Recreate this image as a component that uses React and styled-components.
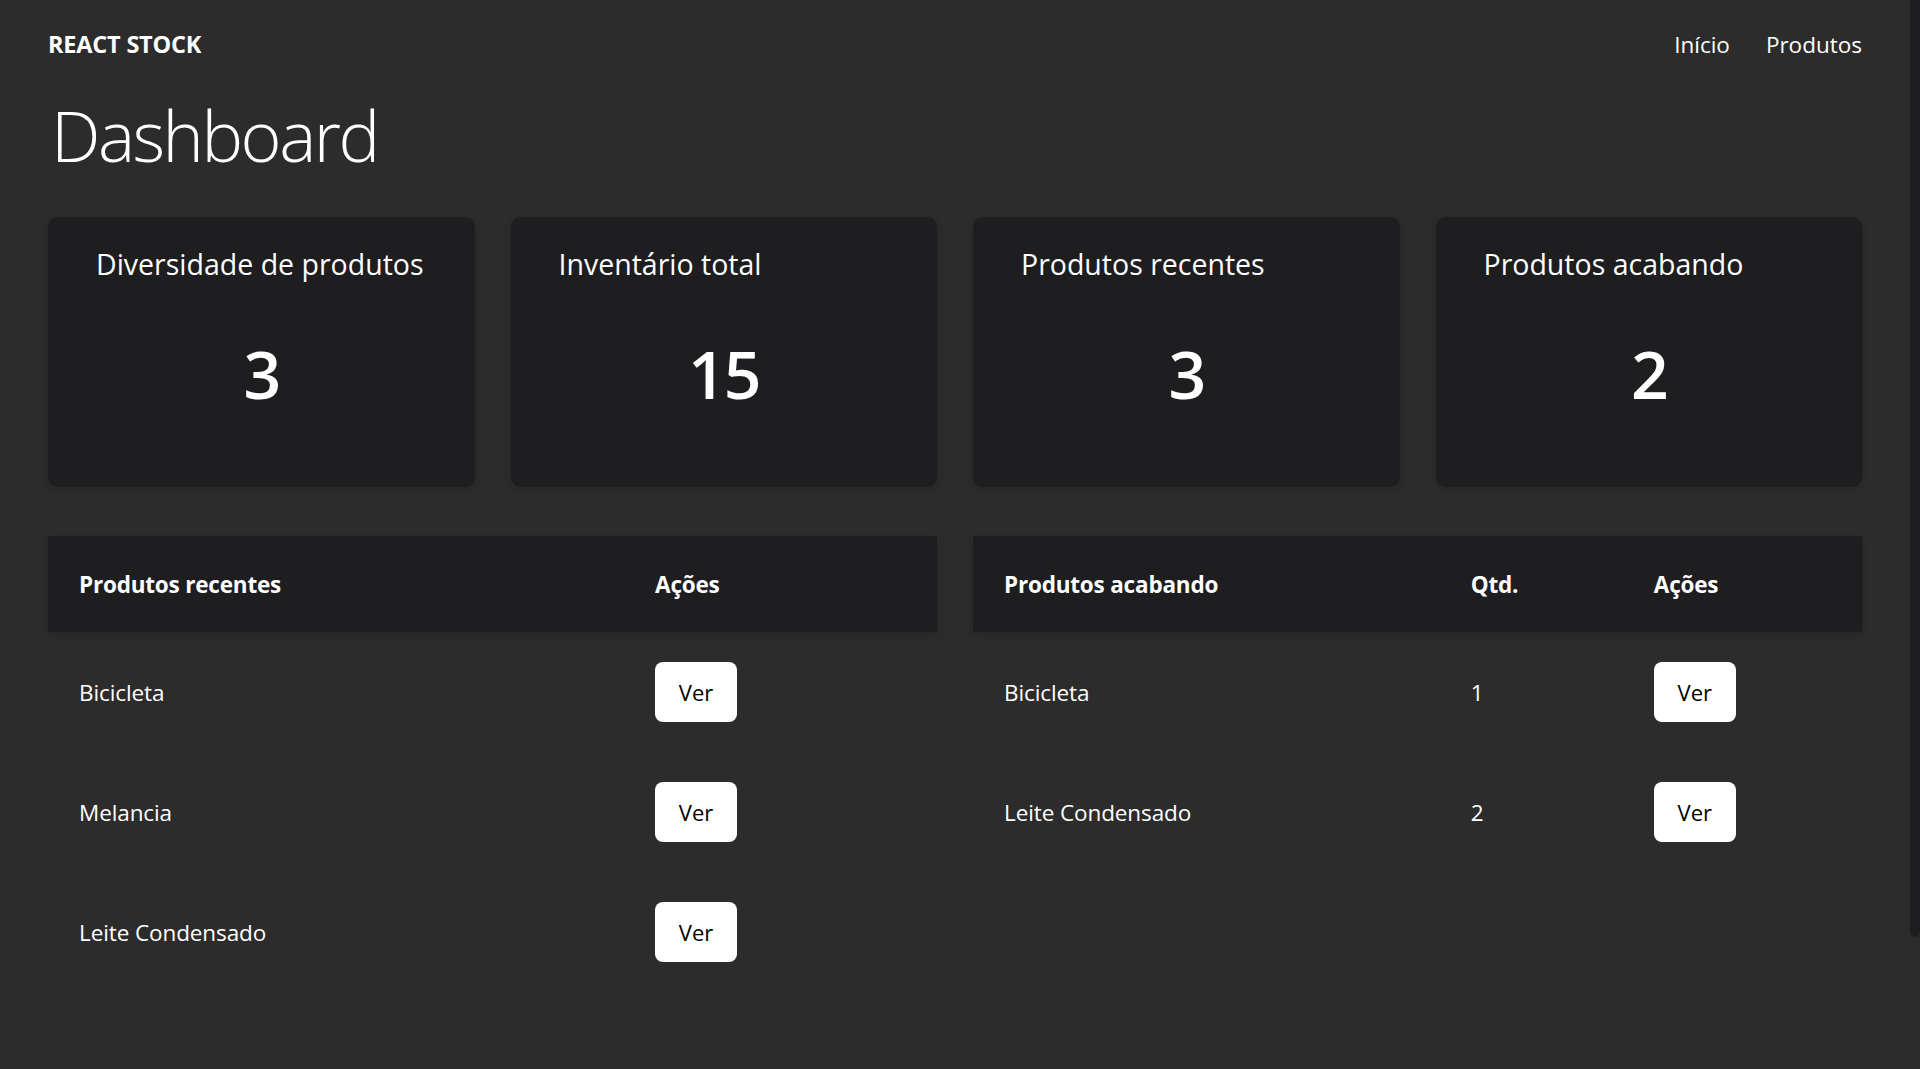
import React from "react";
import styled, { createGlobalStyle } from "styled-components";

const Global = createGlobalStyle`
  body {
    margin: 0;
    background: #2c2c2c;
    color: #ffffff;
    font-family: "Open Sans", "Noto Sans", sans-serif;
  }
  * { box-sizing: border-box; }
`;

const Page = styled.div`
  padding: 0 58px 228px 48px;
`;

const ScrollRail = styled.div`
  position: fixed;
  top: 0;
  right: 0;
  width: 10px;
  height: 100vh;
  background: #2c2c2c;
`;

const ScrollThumb = styled.div`
  width: 10px;
  height: 937px;
  background: #1e1d20;
  border-radius: 0 0 6px 6px;
`;

const Header = styled.header`
  display: flex;
  align-items: center;
  justify-content: space-between;
  height: 88px;
`;

const Brand = styled.div`
  font-size: 23.5px;
  font-weight: 700;
  letter-spacing: -0.2px;
`;

const Nav = styled.nav`
  display: flex;
  gap: 36px;
`;

const NavLink = styled.a`
  color: #ffffff;
  text-decoration: none;
  font-size: 22.5px;
`;

const Title = styled.h1`
  margin: 0;
  font-size: 70px;
  font-weight: 300;
  line-height: 1;
  padding: 12px 0 47px 3px;
  letter-spacing: -2.5px;
`;

const Cards = styled.div`
  display: grid;
  grid-template-columns: repeat(4, 1fr);
  gap: 36px;
`;

const Card = styled.div`
  background: #1e1d20;
  border-radius: 10px;
  height: 270px;
  padding: 29px 48px 34px;
  box-shadow: 0 2px 6px rgba(0, 0, 0, 0.15);
  display: flex;
  flex-direction: column;
`;

const CardTitle = styled.h2`
  margin: 0;
  font-size: 28.5px;
  font-weight: 400;
  line-height: 1.3;
`;

const CardValue = styled.div`
  flex: 1;
  display: flex;
  align-items: center;
  justify-content: center;
  font-size: 66px;
  font-weight: 600;
  letter-spacing: -2px;
  padding-top: 10px;
`;

const Tables = styled.div`
  display: grid;
  grid-template-columns: 1fr 1fr;
  gap: 36px;
  margin-top: 49px;
  align-items: start;
`;

const Table = styled.table`
  width: 100%;
  border-collapse: collapse;
  table-layout: fixed;
`;

const HeadRow = styled.tr`
  background: #1e1d20;
  box-shadow: 0 2px 6px rgba(0, 0, 0, 0.15);
`;

const Th = styled.th`
  height: 96px;
  padding: 0 31px;
  text-align: left;
  font-size: 22.5px;
  font-weight: 700;
  width: ${(p) => p.$w || "auto"};
  letter-spacing: -0.2px;
`;

const Td = styled.td`
  height: 120px;
  padding: 0 31px;
  font-size: 22.5px;
  letter-spacing: -0.1px;
`;

const Button = styled.button`
  width: 82px;
  height: 60px;
  border: none;
  border-radius: 8px;
  background: #ffffff;
  color: #000000;
  font-family: inherit;
  font-size: 22px;
  cursor: pointer;
`;

const stats = [
  { title: "Diversidade de produtos", value: 3 },
  { title: "Inventário total", value: 15 },
  { title: "Produtos recentes", value: 3 },
  { title: "Produtos acabando", value: 2 },
];

const recent = ["Bicicleta", "Melancia", "Leite Condensado"];
const ending = [
  { name: "Bicicleta", qty: 1 },
  { name: "Leite Condensado", qty: 2 },
];

export default function App() {
  return (
    <>
      <Global />
      <Page>
        <Header>
          <Brand>REACT STOCK</Brand>
          <Nav>
            <NavLink href="#">Início</NavLink>
            <NavLink href="#">Produtos</NavLink>
          </Nav>
        </Header>
        <Title>Dashboard</Title>
        <Cards>
          {stats.map((s) => (
            <Card key={s.title}>
              <CardTitle>{s.title}</CardTitle>
              <CardValue>{s.value}</CardValue>
            </Card>
          ))}
        </Cards>
        <Tables>
          <Table>
            <thead>
              <HeadRow>
                <Th $w="64.8%">Produtos recentes</Th>
                <Th>Ações</Th>
              </HeadRow>
            </thead>
            <tbody>
              {recent.map((r) => (
                <tr key={r}>
                  <Td>{r}</Td>
                  <Td>
                    <Button>Ver</Button>
                  </Td>
                </tr>
              ))}
            </tbody>
          </Table>
          <Table>
            <thead>
              <HeadRow>
                <Th $w="52.5%">Produtos acabando</Th>
                <Th $w="20.6%">Qtd.</Th>
                <Th>Ações</Th>
              </HeadRow>
            </thead>
            <tbody>
              {ending.map((r) => (
                <tr key={r.name}>
                  <Td>{r.name}</Td>
                  <Td>{r.qty}</Td>
                  <Td>
                    <Button>Ver</Button>
                  </Td>
                </tr>
              ))}
            </tbody>
          </Table>
        </Tables>
      </Page>
      <ScrollRail aria-hidden="true">
        <ScrollThumb />
      </ScrollRail>
    </>
  );
}
